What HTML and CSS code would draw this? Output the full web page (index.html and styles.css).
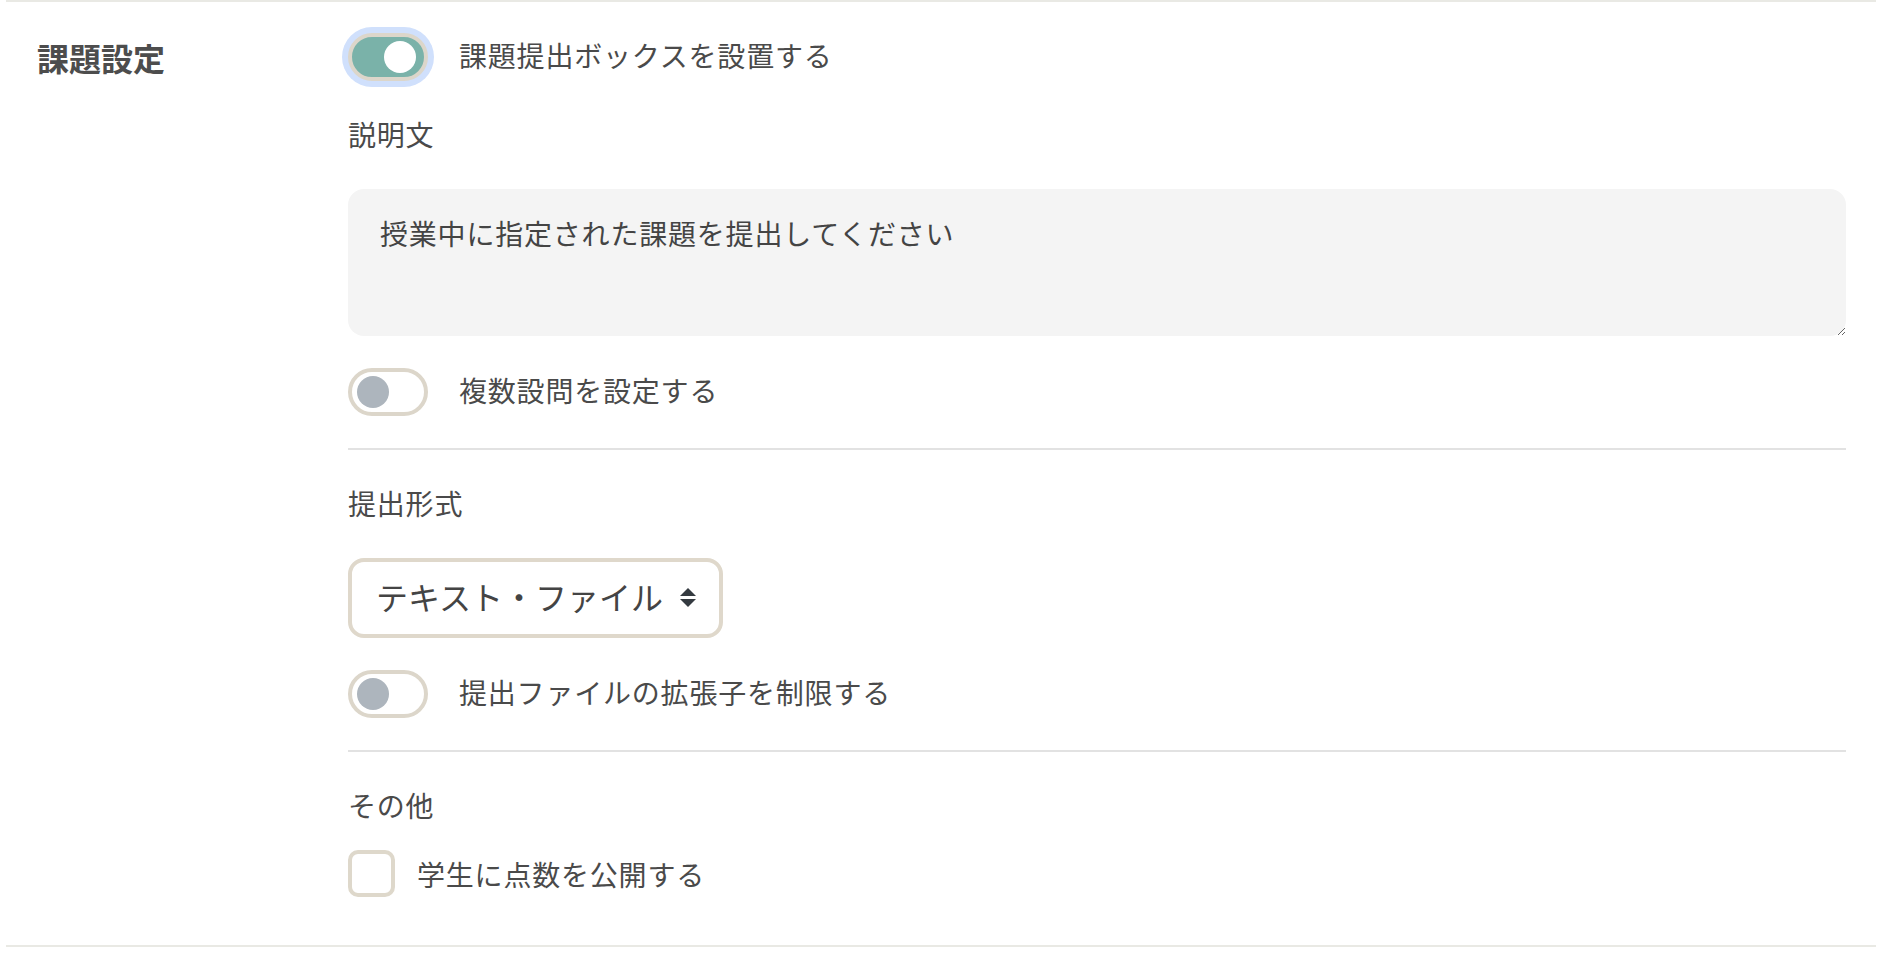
FILE: index.html
```html
<!DOCTYPE html>
<html lang="ja">
<head>
<meta charset="utf-8">
<title>課題設定</title>
<link rel="stylesheet" href="styles.css">
</head>
<body>
<section class="settings">
  <div class="row">
    <h2 class="row-title">課題設定</h2>
    <div class="row-body">
      <label class="switch-line">
        <span class="switch on"><span class="knob"></span></span>
        <span class="switch-text">課題提出ボックスを設置する</span>
      </label>

      <div class="field-label">説明文</div>
      <textarea class="desc">授業中に指定された課題を提出してください</textarea>

      <label class="switch-line spaced">
        <span class="switch"><span class="knob"></span></span>
        <span class="switch-text">複数設問を設定する</span>
      </label>

      <hr class="divider">

      <div class="field-label">提出形式</div>
      <div class="select-wrap">
        <select class="select">
          <option>テキスト・ファイル</option>
        </select>
        <svg class="select-arrow" width="16" height="19" viewBox="0 0 16 19" aria-hidden="true">
          <polygon points="0,8 8,0 16,8" fill="#343a40"/>
          <polygon points="0,11 16,11 8,19" fill="#343a40"/>
        </svg>
      </div>

      <label class="switch-line spaced">
        <span class="switch"><span class="knob"></span></span>
        <span class="switch-text">提出ファイルの拡張子を制限する</span>
      </label>

      <hr class="divider">

      <div class="field-label">その他</div>
      <label class="check-line">
        <span class="checkbox"></span>
        <span class="check-text">学生に点数を公開する</span>
      </label>
    </div>
  </div>
</section>
</body>
</html>
```

FILE: styles.css
```css
body {
  margin: 0;
  background: #ffffff;
  font-family: "Noto Sans CJK JP", "Noto Sans", sans-serif;
  color: #4a4a4a;
}

.settings {
  margin-left: 6px;
  width: 1870px;
  border-top: 2px solid #e9e9e4;
  border-bottom: 2px solid #e9e9e4;
}

.row {
  display: grid;
  grid-template-columns: 311px 1fr;
  padding: 31px 30px 48px 31px;
}

.row-title {
  margin: 0;
  font-size: 32px;
  font-weight: 700;
  line-height: 48px;
  color: #4d4d4d;
}

.row-body {
  display: flex;
  flex-direction: column;
  align-items: flex-start;
}

.switch-line {
  display: flex;
  align-items: center;
  gap: 31px;
}

.switch-line.spaced {
  margin-top: 32px;
}

.switch {
  box-sizing: border-box;
  width: 80px;
  height: 48px;
  border: 4px solid #dcd6ca;
  border-radius: 24px;
  background: #ffffff;
  display: flex;
  align-items: center;
  padding: 0 5px;
}

.switch.on {
  background: #7ab2a9;
  justify-content: flex-end;
  padding-right: 8px;
  box-shadow: 0 0 0 6px #d0e0fc;
}

.knob {
  width: 32px;
  height: 32px;
  border-radius: 50%;
  background: #adb5bd;
}

.switch.on .knob {
  background: #ffffff;
}

.switch-text {
  font-size: 28px;
  line-height: 42px;
  letter-spacing: 0.8px;
  padding-bottom: 4px;
}

.field-label {
  margin-top: 32px;
  padding-bottom: 3px;
  font-size: 28px;
  line-height: 42px;
  letter-spacing: 0.8px;
}

.desc {
  margin-top: 31px;
  width: 100%;
  height: 147px;
  box-sizing: border-box;
  border: 0;
  border-radius: 16px;
  background: #f4f4f4;
  padding: 23px 32px 26px;
  font-family: "Noto Sans CJK JP", "Noto Sans", sans-serif;
  font-size: 28px;
  line-height: 42px;
  letter-spacing: 0.8px;
  color: #444444;
  resize: vertical;
  outline: none;
}

.divider {
  width: 100%;
  height: 2px;
  border: 0;
  margin: 32px 0 0;
  background: #e2e2e2;
}

.select-wrap {
  position: relative;
  margin-top: 31px;
}

.select {
  -webkit-appearance: none;
  appearance: none;
  box-sizing: border-box;
  width: 375px;
  height: 80px;
  border: 4px solid #dfd8cb;
  border-radius: 16px;
  background: #ffffff;
  padding: 0 56px 5px 24px;
  font-family: "Noto Sans CJK JP", "Noto Sans", sans-serif;
  font-size: 32px;
  color: #444444;
  outline: none;
}

.select-arrow {
  position: absolute;
  right: 27px;
  top: 30px;
  pointer-events: none;
}

.check-line {
  margin-top: 21px;
  display: flex;
  align-items: center;
  gap: 22px;
}

.check-text {
  font-size: 28px;
  line-height: 42px;
  letter-spacing: 0.8px;
}

.checkbox {
  box-sizing: border-box;
  width: 47px;
  height: 47px;
  border: 4px solid #ded8cb;
  border-radius: 10px;
  background: #ffffff;
}
```
